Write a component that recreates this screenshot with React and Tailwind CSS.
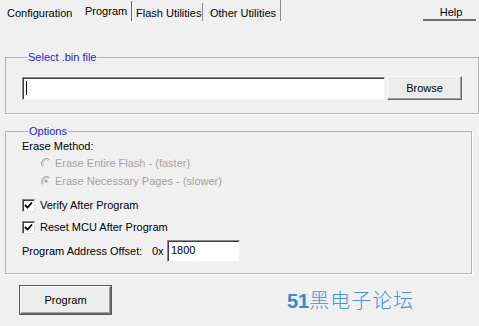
import React from "react";

function Check() {
  return (
    <span className="w-[13px] h-[13px] bg-white border border-t-[#808080] border-l-[#808080] border-r-[#e0e0e0] border-b-[#e0e0e0] shadow-[inset_1px_1px_0_#404040] flex items-center justify-center shrink-0">
      <svg width="9" height="9" viewBox="0 0 9 9">
        <path d="M1 4 L3.5 6.5 L8 1.5" stroke="#000" strokeWidth="1.8" fill="none" />
      </svg>
    </span>
  );
}

function Radio({ selected }) {
  return (
    <svg width="12" height="12" viewBox="0 0 12 12" className="shrink-0">
      <path d="M9.5 2.5 A5 5 0 0 0 2.5 9.5" stroke="#a0a0a0" strokeWidth="1" fill="none" />
      <path d="M8.7 3.3 A4 4 0 0 0 3.3 8.7" stroke="#c8c8c8" strokeWidth="1" fill="none" />
      {selected && <circle cx="6" cy="6" r="1.6" fill="#a0a0a0" />}
    </svg>
  );
}

export default function App() {
  return (
    <div className="w-[479px] h-[326px] bg-[#f0f0f0] overflow-hidden text-[11px] text-black font-['Liberation_Sans',Arial,sans-serif] leading-[14px] whitespace-nowrap">
      {/* Tabs row */}
      <div className="flex h-[24px] items-start">
        <div className="w-[79px] pl-[7px] pt-[6px]">Configuration</div>
        <div className="w-[53px] pl-[6px] pt-[3px] mt-[1px] h-[20px] border-r border-r-[#6a6a6a]">Program</div>
        <div className="w-[71px] pl-[4px] pt-[3px] mt-[3px] h-[18px] border-r border-r-[#8a8a8a]">Flash Utilities</div>
        <div className="w-[78px] pl-[7px] pt-[6px] h-[21px] border-r border-r-[#8a8a8a]">Other Utilities</div>
        <div className="ml-auto mr-[3px] mt-[3px] w-[53px] h-[18px] border-b-2 border-b-[#707070] flex items-center justify-center pt-[1px] pl-[3px]">Help</div>
      </div>

      {/* Select .bin file */}
      <fieldset className="mx-[5px] mt-[26px] w-[467px] h-[64px] border border-[#b4b4b4] shadow-[1px_1px_0_#fff] px-[16px] pt-[12px]">
        <legend className="ml-[5px] px-[1px] text-[#2222d8]">Select .bin file</legend>
        <div className="flex items-center">
          <div className="w-[363px] h-[23px] bg-white border border-t-[#8a8a8a] border-l-[#8a8a8a] border-r-[#f4f4f4] border-b-[#f4f4f4] shadow-[inset_1px_1px_0_#404040] flex items-center pl-[3px]">
            <span className="w-px h-[14px] bg-black" />
          </div>
          <div className="ml-[2px] w-[75px] h-[24px] bg-[#ececec] border border-t-[#f8f8f8] border-l-[#f8f8f8] border-r-[#6a6a6a] border-b-[#6a6a6a] shadow-[inset_-1px_-1px_0_#a0a0a0] flex items-center justify-center">
            Browse
          </div>
        </div>
      </fieldset>

      {/* Options */}
      <fieldset className="mx-[5px] mt-[10px] w-[467px] h-[150px] border border-[#b4b4b4] shadow-[1px_1px_0_#fff] pl-[16px]">
        <legend className="ml-[6px] px-[1px] text-[#2222d8]">Options</legend>
        <div className="mt-[1px]">Erase Method:</div>
        <div className="flex flex-col gap-[4px] mt-[3px] pl-[18px] text-[#a3a3a3]">
          <div className="flex items-center gap-[3px] h-[14px]"><Radio /><span>Erase Entire Flash - (faster)</span></div>
          <div className="flex items-center gap-[3px] h-[14px]"><Radio selected /><span>Erase Necessary Pages - (slower)</span></div>
        </div>
        <div className="flex items-center gap-[5px] mt-[10px]"><Check /><span>Verify After Program</span></div>
        <div className="flex items-center gap-[5px] mt-[8px]"><Check /><span>Reset MCU After Program</span></div>
        <div className="flex items-center mt-[6px]">
          <span className="w-[130px]">Program Address Offset:</span>
          <span className="w-[15px]">0x</span>
          <div className="w-[73px] h-[22px] bg-white border border-t-[#8a8a8a] border-l-[#8a8a8a] border-r-[#f4f4f4] border-b-[#f4f4f4] shadow-[inset_1px_1px_0_#404040] flex items-center pl-[3px] pb-[2px]">
            1800
          </div>
        </div>
      </fieldset>

      {/* Bottom */}
      <div className="flex items-center mt-[12px]">
        <div className="ml-[20px] w-[91px] h-[28px] bg-[#ececec] border border-t-[#f8f8f8] border-l-[#f8f8f8] border-r-[#6a6a6a] border-b-[#6a6a6a] shadow-[inset_-1px_-1px_0_#a0a0a0,0_0_0_1px_#5a5a5a] flex items-center justify-center">
          Program
        </div>
        <div className="ml-[176px] text-[20px] leading-[24px] text-[#4a91d3] font-['Noto_Sans_CJK_SC',sans-serif]">
          <span className="font-bold text-[#3a86d2] font-['Liberation_Sans',sans-serif]">51</span>
          <span className="font-light tracking-[1px]">黑电子论坛</span>
        </div>
      </div>
    </div>
  );
}
